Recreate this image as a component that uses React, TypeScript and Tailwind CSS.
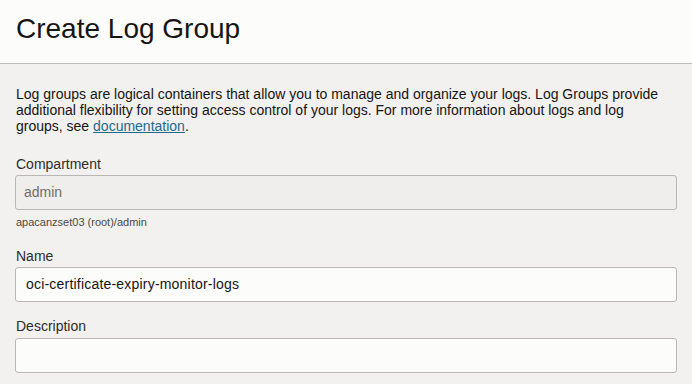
import React from "react";

export default function App() {
  return (
    <div className="w-[692px] h-[384px] overflow-hidden bg-[#f2f1ef] text-[#161513] font-['Liberation_Sans',Arial,sans-serif]">
      <header className="h-[64px] bg-[#fcfcfb] border-b border-[#bdbcb9] px-[16px] pt-[13px]">
        <h1 className="text-[28px] leading-[32px] font-normal">Create Log Group</h1>
      </header>
      <div className="px-[15px] pt-[22px]">
        <p className="max-w-[653px] px-[1px] text-[14px] leading-[16px]">
          Log groups are logical containers that allow you to manage and organize your logs. Log Groups provide
          additional flexibility for setting access control of your logs. For more information about logs and log
          groups, see{" "}
          <a href="#" className="text-[#1e6a8e] underline">
            documentation
          </a>
          .
        </p>

        <label className="mt-[22px] mb-[3px] block px-[1px] text-[14px] leading-[16px] text-[#2f2c29]">Compartment</label>
        <div className="h-[35px] rounded-[3px] border border-[#b8b7b4] bg-[#efeeec] px-[8px] flex items-center text-[14px] text-[#716d68]">
          admin
        </div>
        <div className="mt-[5px] px-[1px] text-[11px] leading-[14px] text-[#4d4945]">apacanzset03 (root)/admin</div>

        <label className="mt-[19px] mb-[3px] block px-[1px] text-[14px] leading-[16px] text-[#2f2c29]">Name</label>
        <div className="h-[35px] rounded-[3px] border border-[#b8b7b4] bg-[#fcfcfb] px-[10px] flex items-center text-[14px] tracking-[0.2px] text-[#161513]">
          oci-certificate-expiry-monitor-logs
        </div>

        <label className="mt-[16px] mb-[4px] block px-[1px] text-[14px] leading-[16px] text-[#2f2c29]">Description</label>
        <div className="h-[35px] rounded-[3px] border border-[#b8b7b4] bg-[#fcfcfb]"></div>
      </div>
    </div>
  );
}
